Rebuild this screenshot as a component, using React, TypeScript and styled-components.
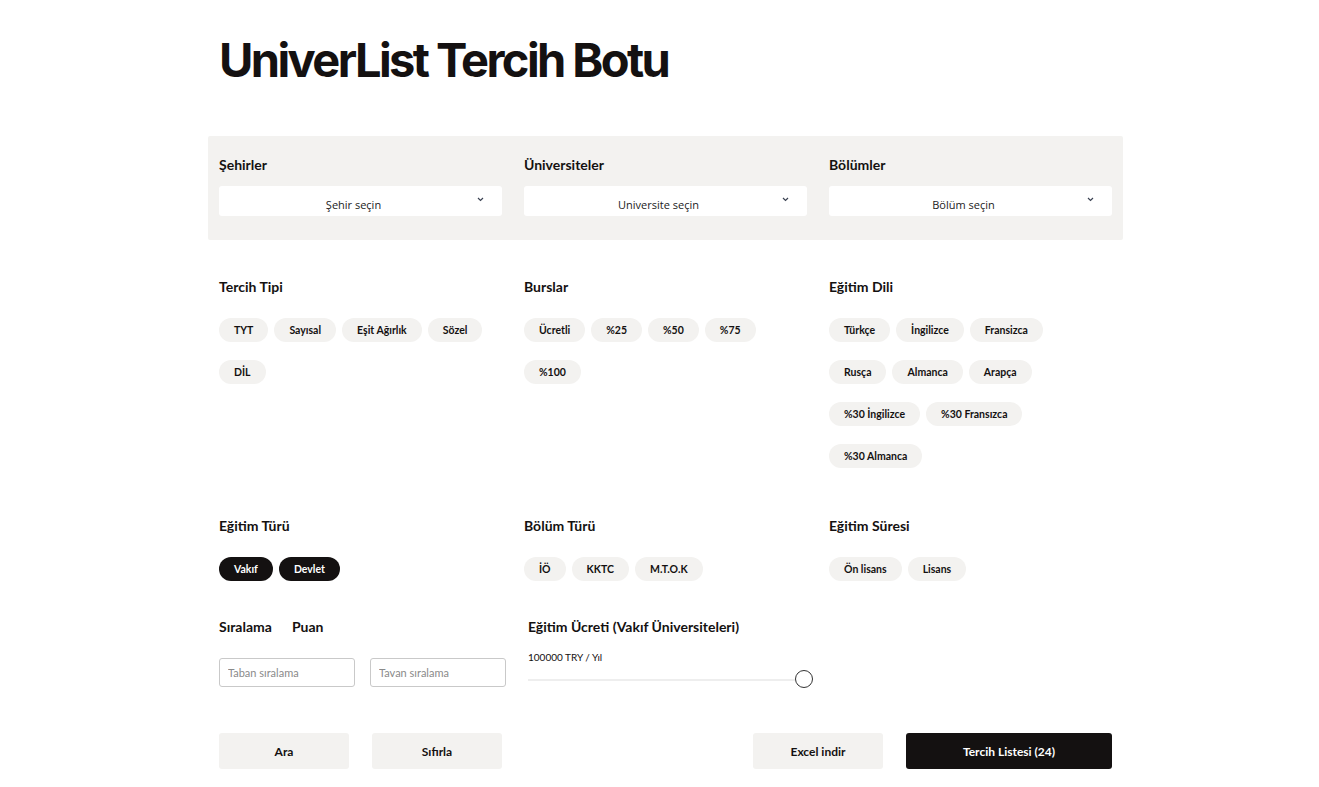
import React from "react";
import styled, { createGlobalStyle } from "styled-components";

const GlobalStyle = createGlobalStyle`
  body {
    margin: 0;
    background: #fff;
    font-family: Lato, "Noto Sans", sans-serif;
    color: #141111;
  }
`;

const Page = styled.div`
  width: 915px;
  padding: 31px 0 40px 208px;
`;

const Title = styled.h1`
  margin: 0 0 47px 11px;
  font-family: Inter, sans-serif;
  font-size: 47px;
  line-height: 58px;
  font-weight: 700;
  letter-spacing: -2.6px;
`;

const FilterBox = styled.div`
  background: #f3f2f0;
  border-radius: 2px;
  padding: 19px 11px 24px;
  display: grid;
  grid-template-columns: repeat(3, 283px);
  column-gap: 22px;
`;

const Label = styled.div`
  font-size: 14px;
  line-height: 20px;
  font-weight: 700;
  color: #141111;
`;

const SelectBox = styled.div`
  margin-top: 11px;
  height: 30px;
  background: #fff;
  border-radius: 3px;
  position: relative;
  display: flex;
  align-items: center;
  justify-content: center;
  font-family: "Open Sans", sans-serif;
  font-size: 11px;
  color: #222;
  padding: 7px 14px 0 0;
  box-sizing: border-box;
`;

const Chevron = styled.svg`
  position: absolute;
  right: 18px;
  top: 11px;
`;

const Grid = styled.div<{ $top: number }>`
  display: grid;
  grid-template-columns: repeat(3, 283px);
  column-gap: 22px;
  padding: 0 11px;
  margin-top: ${(p) => p.$top}px;
`;

const Section = styled.div``;

const ChipWrap = styled.div`
  margin-top: 21px;
  max-width: 268px;
  display: flex;
  flex-wrap: wrap;
  column-gap: 6px;
  row-gap: 18px;
`;

const Chip = styled.span<{ $active?: boolean }>`
  height: 24px;
  padding: 0 15px;
  border-radius: 12px;
  display: inline-flex;
  align-items: center;
  font-size: 10.5px;
  font-weight: 700;
  background: ${(p) => (p.$active ? "#141111" : "#f3f2f0")};
  color: ${(p) => (p.$active ? "#fff" : "#141111")};
`;

const TabLabels = styled.div`
  display: flex;
  gap: 20px;
`;

const InputRow = styled.div`
  margin-top: 21px;
  display: flex;
  gap: 15px;
`;

const Input = styled.input`
  width: 136px;
  height: 29px;
  box-sizing: border-box;
  border: 1px solid #c9c9c9;
  border-radius: 3px;
  padding: 0 8px;
  font-family: Lato, sans-serif;
  font-size: 11px;
  outline: none;
  &::placeholder {
    color: #8a8a8a;
  }
`;

const SliderSection = styled.div`
  padding-left: 4px;
  grid-column: span 2;
`;

const Amount = styled.div`
  margin-top: 13px;
  font-size: 10px;
  line-height: 14px;
`;

const Track = styled.div`
  position: relative;
  width: 285px;
  height: 2px;
  margin-top: 15px;
  background: #eeeeee;
`;

const Thumb = styled.span`
  position: absolute;
  right: 0;
  top: -9px;
  width: 18px;
  height: 18px;
  box-sizing: border-box;
  border-radius: 50%;
  border: 1px solid #333;
  background: #fff;
`;

const Actions = styled.div`
  margin-top: 46px;
  padding: 0 11px;
  display: flex;
  justify-content: space-between;
`;

const Group = styled.div`
  display: flex;
  gap: 23px;
`;

const Button = styled.button<{ $dark?: boolean; $wide?: boolean }>`
  width: ${(p) => (p.$wide ? 206 : 130)}px;
  height: 36px;
  border: none;
  border-radius: 3px;
  font-family: Lato, sans-serif;
  font-size: 12px;
  font-weight: 700;
  background: ${(p) => (p.$dark ? "#141111" : "#f3f2f0")};
  color: ${(p) => (p.$dark ? "#fff" : "#141111")};
`;

const Select = ({ label, placeholder }: { label: string; placeholder: string }) => (
  <div>
    <Label>{label}</Label>
    <SelectBox>
      {placeholder}
      <Chevron width="7" height="5" viewBox="0 0 7 5">
        <path d="M1 1l2.5 2.5L6 1" fill="none" stroke="#3b4252" strokeWidth="1.2" />
      </Chevron>
    </SelectBox>
  </div>
);

const ChipGroup = ({ label, items, active }: { label: string; items: string[]; active?: boolean }) => (
  <Section>
    <Label>{label}</Label>
    <ChipWrap>
      {items.map((i) => (
        <Chip key={i} $active={active}>
          {i}
        </Chip>
      ))}
    </ChipWrap>
  </Section>
);

export default function App() {
  return (
    <Page>
      <GlobalStyle />
      <Title>UniverList Tercih Botu</Title>
      <FilterBox>
        <Select label="Şehirler" placeholder="Şehir seçin" />
        <Select label="Üniversiteler" placeholder="Universite seçin" />
        <Select label="Bölümler" placeholder="Bölüm seçin" />
      </FilterBox>

      <Grid $top={37}>
        <ChipGroup label="Tercih Tipi" items={["TYT", "Sayısal", "Eşit Ağırlık", "Sözel", "DİL"]} />
        <ChipGroup label="Burslar" items={["Ücretli", "%25", "%50", "%75", "%100"]} />
        <ChipGroup
          label="Eğitim Dili"
          items={["Türkçe", "İngilizce", "Fransizca", "Rusça", "Almanca", "Arapça", "%30 İngilizce", "%30 Fransızca", "%30 Almanca"]}
        />
      </Grid>

      <Grid $top={48}>
        <ChipGroup label="Eğitim Türü" items={["Vakıf", "Devlet"]} active />
        <ChipGroup label="Bölüm Türü" items={["İÖ", "KKTC", "M.T.O.K"]} />
        <ChipGroup label="Eğitim Süresi" items={["Ön lisans", "Lisans"]} />
      </Grid>

      <Grid $top={36}>
        <Section>
          <TabLabels>
            <Label>Sıralama</Label>
            <Label>Puan</Label>
          </TabLabels>
          <InputRow>
            <Input placeholder="Taban sıralama" />
            <Input placeholder="Tavan sıralama" />
          </InputRow>
        </Section>
        <SliderSection>
          <Label>Eğitim Ücreti (Vakıf Üniversiteleri)</Label>
          <Amount>100000 TRY / Yıl</Amount>
          <Track>
            <Thumb />
          </Track>
        </SliderSection>
      </Grid>

      <Actions>
        <Group>
          <Button>Ara</Button>
          <Button>Sıfırla</Button>
        </Group>
        <Group>
          <Button>Excel indir</Button>
          <Button $dark $wide>
            Tercih Listesi (24)
          </Button>
        </Group>
      </Actions>
    </Page>
  );
}
